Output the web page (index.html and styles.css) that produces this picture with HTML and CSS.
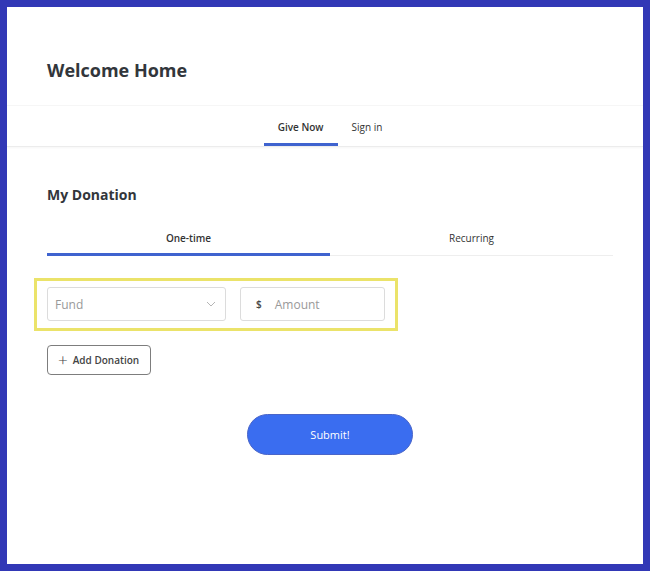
FILE: index.html
```html
<!DOCTYPE html>
<html lang="en">
<head>
  <meta charset="UTF-8">
  <title>Welcome Home</title>
  <link rel="stylesheet" href="styles.css">
</head>
<body>
  <div class="frame">
    <header class="header">
      <h1>Welcome Home</h1>
    </header>

    <nav class="nav">
      <a class="nav-item active">Give Now</a>
      <a class="nav-item">Sign in</a>
    </nav>

    <main class="content">
      <h2>My Donation</h2>

      <div class="tabs">
        <div class="tab active">One-time</div>
        <div class="tab">Recurring</div>
      </div>

      <div class="highlight">
        <div class="row">
          <div class="select">
            <span>Fund</span>
            <svg width="10" height="6" viewBox="0 0 10 6"><path d="M1 1l4 4 4-4" fill="none" stroke="#b5b5b5" stroke-width="1"/></svg>
          </div>
          <div class="amount">
            <span class="currency">$</span>
            <span class="placeholder">Amount</span>
          </div>
        </div>
      </div>

      <button class="add-btn"><span class="plus">+</span> Add Donation</button>

      <div class="submit-wrap">
        <button class="submit">Submit!</button>
      </div>
    </main>
  </div>
</body>
</html>
```

FILE: styles.css
```css
* {
  box-sizing: border-box;
}

body {
  margin: 0;
  background: #3238b6;
  font-family: 'Open Sans', 'Noto Sans', sans-serif;
  color: #333;
}

.frame {
  margin: 7px;
  height: 557px;
  background: #ffffff;
  overflow: hidden;
}

.header {
  height: 99px;
  padding: 50px 40px 0;
  border-bottom: 1px solid #f6f6f6;
}

h1 {
  margin: 0;
  font-size: 18px;
  line-height: 26px;
  font-weight: 700;
  color: #32363b;
}

.nav {
  display: flex;
  justify-content: center;
  height: 41px;
  border-bottom: 1px solid #ececec;
  box-shadow: 0 1px 2px rgba(0, 0, 0, 0.04);
  padding-left: 10px;
}

.nav-item {
  display: flex;
  align-items: center;
  padding: 5px 14px 0;
  font-size: 10px;
  color: #333;
  border-bottom: 3px solid transparent;
}

.nav-item.active {
  font-weight: 600;
  border-bottom-color: #3f63cf;
}

.content {
  padding: 38px 30px 0 40px;
}

h2 {
  margin: 0;
  font-size: 14px;
  line-height: 20px;
  font-weight: 700;
  color: #32363b;
}

.tabs {
  display: flex;
  margin-top: 19px;
  border-bottom: 1px solid #eeeeee;
}

.tab {
  flex: 1;
  text-align: center;
  font-size: 10px;
  line-height: 14px;
  padding: 7px 0 8px;
  color: #333;
  border-bottom: 3px solid transparent;
  margin-bottom: -1px;
}

.tab.active {
  font-weight: 600;
  border-bottom-color: #3f63cf;
}

.highlight {
  margin: 22px 0 0 -13px;
  width: 364px;
  height: 53px;
  border: 3px solid #ebe36a;
  padding: 6px 0 0 10px;
}

.row {
  display: flex;
  gap: 14px;
}

.select,
.amount {
  height: 34px;
  border: 1px solid #dcdcdc;
  border-radius: 3px;
  display: flex;
  align-items: center;
  font-size: 12px;
  color: #999;
}

.select {
  width: 179px;
  padding: 0 9px 0 7px;
  justify-content: space-between;
}

.amount {
  width: 145px;
  padding-left: 15px;
}

.currency {
  font-size: 10px;
  color: #444;
  font-weight: 600;
  margin-right: 13px;
}

.add-btn {
  margin-top: 14px;
  width: 104px;
  height: 30px;
  border: 1px solid #7d7d7d;
  border-radius: 4px;
  background: #fff;
  font-family: inherit;
  font-size: 10px;
  font-weight: 600;
  color: #444;
  display: flex;
  align-items: center;
  padding: 0 0 0 10px;
}

.plus {
  font-size: 17px;
  font-weight: 300;
  margin-right: 5px;
  line-height: 1;
  margin-top: -2px;
}

.submit-wrap {
  display: flex;
  padding-left: 200px;
  margin-top: 39px;
}

.submit {
  width: 166px;
  height: 41px;
  border: 1px solid #4a65c8;
  border-radius: 21px;
  background: #3a6df0;
  color: #fff;
  font-family: inherit;
  font-size: 11px;
}
```
